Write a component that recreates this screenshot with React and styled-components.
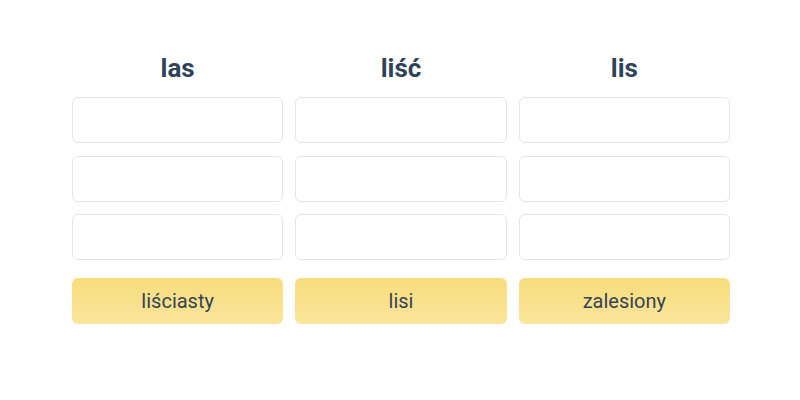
import React from "react";
import styled, { createGlobalStyle } from "styled-components";

const GlobalStyle = createGlobalStyle`
	body {
		margin: 0;
		background: #ffffff;
		font-family: Roboto, "Liberation Sans", sans-serif;
	}
`;

const Board = styled.div`
	display: grid;
	grid-template-columns: repeat(3, 1fr);
	column-gap: 12px;
	width: 658px;
	margin: 0 auto;
	padding: 52px 0 0 2px;
`;

const Column = styled.div`
	display: flex;
	flex-direction: column;
`;

const Heading = styled.h2`
	margin: 0 0 13px;
	height: 32px;
	line-height: 32px;
	text-align: center;
	font-size: 26px;
	font-weight: 700;
	color: #2f4358;
`;

const Slot = styled.div`
	box-sizing: border-box;
	height: 46px;
	margin-bottom: 12.5px;
	border: 1px solid #e2e6ea;
	border-radius: 6px;
	background: #ffffff;
`;

const Word = styled.div`
	box-sizing: border-box;
	height: 46px;
	margin-top: 5px;
	display: flex;
	align-items: center;
	justify-content: center;
	border-radius: 6px;
	background: linear-gradient(180deg, #f8dd7c 0%, #f9e59c 100%);
	font-size: 20px;
	color: #364354;
`;

const columns = [
	{ title: "las", word: "liściasty" },
	{ title: "liść", word: "lisi" },
	{ title: "lis", word: "zalesiony" },
];

const App = () => {
	return (
		<>
			<GlobalStyle />
			<Board>
				{columns.map((col) => (
					<Column key={col.title}>
						<Heading>{col.title}</Heading>
						<Slot />
						<Slot />
						<Slot />
						<Word>{col.word}</Word>
					</Column>
				))}
			</Board>
		</>
	);
};

export default App;
